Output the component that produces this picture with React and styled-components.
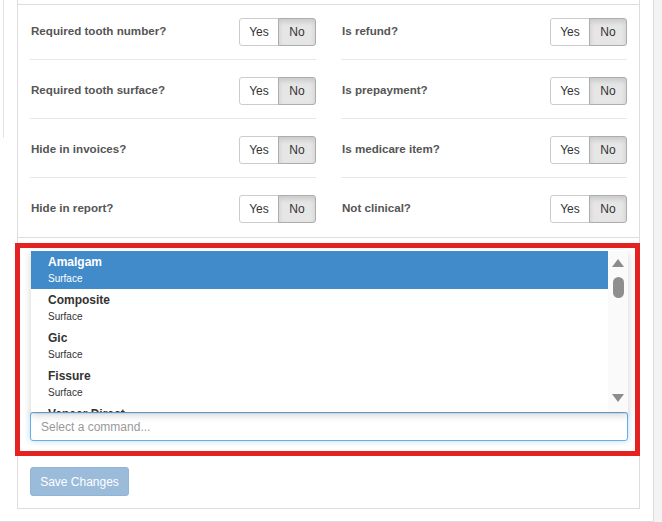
import React from "react";
import styled, { createGlobalStyle } from "styled-components";

const GlobalStyle = createGlobalStyle`
  html, body {
    margin: 0;
    padding: 0;
    background: #f3f3f3;
    font-family: "Liberation Sans", Arial, sans-serif;
  }
  * {
    box-sizing: border-box;
  }
`;

const Page = styled.div`
  display: flex;
  align-items: flex-start;
  width: 654px;
  padding: 0 13px 12px 3px;
  background: #fff;
  border-right: 1px solid #dcdcdc;
  border-bottom: 1px solid #dcdcdc;
`;

const Strip = styled.div`
  width: 1px;
  height: 138px;
  margin-right: 13px;
  background: #e3e3e3;
  flex-shrink: 0;
`;

const Panel = styled.div`
  flex: 1;
  border: 1px solid #ddd;
  border-top: none;
`;

const Heading = styled.div`
  height: 5px;
  border-bottom: 1px solid #ddd;
`;

const Options = styled.div`
  display: grid;
  grid-template-columns: 286px 286px;
  column-gap: 25px;
  padding: 0 11px 0 12px;
  border-bottom: 1px solid #ddd;
`;

const OptionRow = styled.div`
  display: flex;
  justify-content: space-between;
  align-items: flex-start;
  padding: ${(p) => (p.$first ? "13px" : "17px")} 0 ${(p) => (p.$last ? "14px" : "13px")};
  border-bottom: ${(p) => (p.$last ? "none" : "1px solid #e8e8e8")};
`;

const Label = styled.span`
  margin: 4px 0 0 1px;
  font-size: 11.6px;
  line-height: 17px;
  font-weight: bold;
  color: #555;
`;

const Toggle = styled.div`
  display: inline-flex;
`;

const ToggleButton = styled.button`
  height: 28px;
  width: ${(p) => (p.$active ? "38px" : "40px")};
  margin-left: ${(p) => (p.$active ? "-1px" : "0")};
  padding: 0;
  font-family: inherit;
  font-size: 12px;
  color: #333;
  background: ${(p) => (p.$active ? "#e6e6e6" : "#fff")};
  border: 1px solid ${(p) => (p.$active ? "#adadad" : "#ccc")};
  border-radius: ${(p) => (p.$active ? "0 3px 3px 0" : "3px 0 0 3px")};
  box-shadow: ${(p) => (p.$active ? "inset 0 3px 5px rgba(0,0,0,0.125)" : "none")};
  cursor: pointer;
`;

const FormSection = styled.div`
  padding: 5px 11px 12px 12px;
`;

const Highlight = styled.div`
  margin: 0 -12px 0 -15px;
  padding: 2px 7px 10px 10px;
  border: 5px solid #e52222;
`;

const Listbox = styled.div`
  position: relative;
  z-index: 2;
  display: flex;
  height: 162px;
  margin-left: 1px;
  padding-top: 1px;
  background: #fff;
  box-shadow: 0 3px 8px rgba(0, 0, 0, 0.18);
`;

const Items = styled.div`
  flex: 1;
  overflow: hidden;
`;

const Item = styled.div`
  height: 38px;
  padding: 3px 17px 4px;
  background: ${(p) => (p.$selected ? "#428bca" : "#fff")};
  color: ${(p) => (p.$selected ? "#fff" : "#333")};
`;

const ItemTitle = styled.div`
  font-size: 12px;
  line-height: 16px;
  font-weight: bold;
  margin-bottom: 2px;
`;

const ItemSub = styled.div`
  font-size: 10px;
  line-height: 13px;
`;

const Scrollbar = styled.div`
  display: flex;
  flex-direction: column;
  align-items: center;
  width: 20px;
  padding: 8px 0 10px;
  background: #fafafa;
`;

const Arrow = styled.span`
  width: 0;
  height: 0;
  border-left: 6px solid transparent;
  border-right: 6px solid transparent;
  ${(p) =>
    p.$down
      ? "border-top: 8px solid #8c8c8c; margin-top: auto;"
      : "border-bottom: 8px solid #8c8c8c;"}
`;

const Thumb = styled.span`
  width: 11px;
  height: 21px;
  margin-top: 10px;
  border-radius: 6px;
  background: #8e8e8e;
`;

const CommandInput = styled.input`
  display: block;
  width: 100%;
  height: 29px;
  padding: 0 10px;
  font-family: inherit;
  font-size: 12px;
  color: #555;
  border: 1px solid #66afe9;
  border-radius: 3px;
  outline: none;
  box-shadow: inset 0 1px 1px rgba(0, 0, 0, 0.075),
    0 0 6px rgba(102, 175, 233, 0.45);

  &::placeholder {
    color: #999;
  }
`;

const SaveButton = styled.button`
  margin-top: 11px;
  height: 29px;
  width: 99px;
  padding: 0;
  font-family: inherit;
  font-size: 12px;
  color: #fff;
  background: #9bbbdb;
  border: 1px solid #93b4d6;
  border-radius: 3px;
  cursor: not-allowed;
`;

const options = [
  "Required tooth number?",
  "Is refund?",
  "Required tooth surface?",
  "Is prepayment?",
  "Hide in invoices?",
  "Is medicare item?",
  "Hide in report?",
  "Not clinical?",
];

const commands = [
  { title: "Amalgam", sub: "Surface" },
  { title: "Composite", sub: "Surface" },
  { title: "Gic", sub: "Surface" },
  { title: "Fissure", sub: "Surface" },
  { title: "Veneer Direct", sub: "Surface" },
];

const App = () => {
  return (
    <>
      <GlobalStyle />
      <Page>
        <Strip />
        <Panel>
          <Heading />
          <Options>
            {options.map((label, i) => (
              <OptionRow key={label} $first={i < 2} $last={i >= options.length - 2}>
                <Label>{label}</Label>
                <Toggle>
                  <ToggleButton>Yes</ToggleButton>
                  <ToggleButton $active>No</ToggleButton>
                </Toggle>
              </OptionRow>
            ))}
          </Options>
          <FormSection>
            <Highlight>
              <Listbox>
                <Items>
                  {commands.map((c, i) => (
                    <Item key={c.title} $selected={i === 0}>
                      <ItemTitle>{c.title}</ItemTitle>
                      <ItemSub>{c.sub}</ItemSub>
                    </Item>
                  ))}
                </Items>
                <Scrollbar>
                  <Arrow />
                  <Thumb />
                  <Arrow $down />
                </Scrollbar>
              </Listbox>
              <CommandInput placeholder="Select a command..." />
            </Highlight>
            <SaveButton disabled>Save Changes</SaveButton>
          </FormSection>
        </Panel>
      </Page>
    </>
  );
};

export default App;
